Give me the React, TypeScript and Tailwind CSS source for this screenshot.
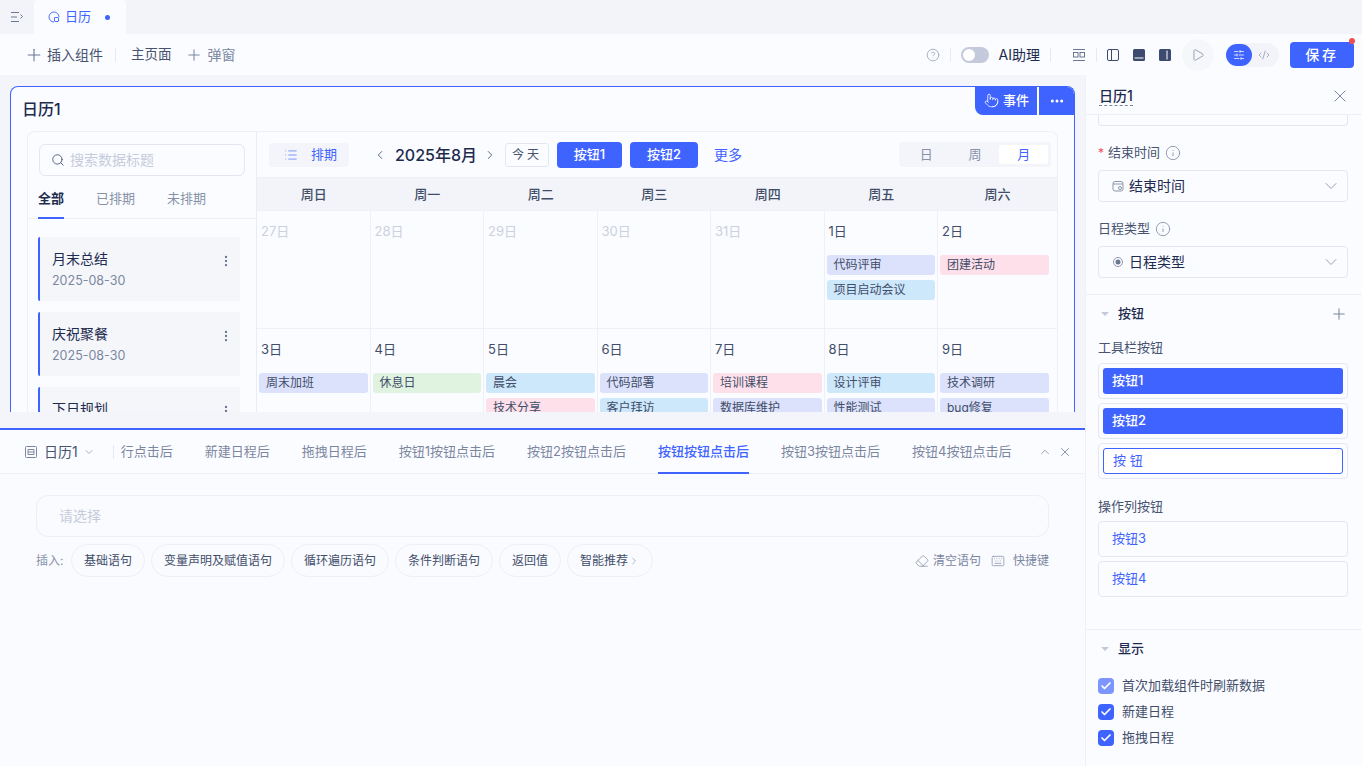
import React from 'react';
import { Plus, ChevronLeft, ChevronRight, ChevronDown, ChevronUp, X, Search, MoreVertical, MoreHorizontal, Check, Info, CircleHelp, Pointer, SlidersHorizontal, CodeXml, Play, List, Eraser, Keyboard } from 'lucide-react';

const weekDays = ['周日', '周一', '周二', '周三', '周四', '周五', '周六'];

const purple = 'bg-[#dce2fb]';
const pink = 'bg-[#fde0ea]';
const blue = 'bg-[#cde7fb]';
const green = 'bg-[#e0f3e0]';

type Cell = { day: string; muted?: boolean; events: [string, string][] };

const rows: Cell[][] = [
  [
    { day: '27日', muted: true, events: [] },
    { day: '28日', muted: true, events: [] },
    { day: '29日', muted: true, events: [] },
    { day: '30日', muted: true, events: [] },
    { day: '31日', muted: true, events: [] },
    { day: '1日', events: [['代码评审', purple], ['项目启动会议', blue]] },
    { day: '2日', events: [['团建活动', pink]] },
  ],
  [
    { day: '3日', events: [['周末加班', purple]] },
    { day: '4日', events: [['休息日', green]] },
    { day: '5日', events: [['晨会', blue], ['技术分享', pink]] },
    { day: '6日', events: [['代码部署', purple], ['客户拜访', blue]] },
    { day: '7日', events: [['培训课程', pink], ['数据库维护', purple]] },
    { day: '8日', events: [['设计评审', blue], ['性能测试', purple]] },
    { day: '9日', events: [['技术调研', purple], ['bug修复', purple]] },
  ],
];

const eventTabs = ['新建日程后', '拖拽日程后', '按钮1按钮点击后', '按钮2按钮点击后', '按钮按钮点击后', '按钮3按钮点击后', '按钮4按钮点击后'];
const chips = ['基础语句', '变量声明及赋值语句', '循环遍历语句', '条件判断语句', '返回值'];

const Sep = () => <div className="w-px h-3.5 bg-[#e6e9f2]" />;

const PanelIcon = ({ part }: { part: 'left' | 'bottom' | 'right' }) => (
  <svg width="14" height="14" viewBox="0 0 14 14" className="text-[#3b4a6e]">
    {part === 'left' && (
      <>
        <rect x="1.5" y="1.5" width="11" height="11" rx="1.5" fill="none" stroke="currentColor" />
        <path d="M5.5 1.5v11" stroke="currentColor" />
      </>
    )}
    {part === 'bottom' && (
      <>
        <rect x="1" y="1" width="12" height="12" rx="1.5" fill="currentColor" />
        <path d="M2.5 10h9" stroke="#fff" strokeWidth="1" />
      </>
    )}
    {part === 'right' && (
      <>
        <rect x="1" y="1" width="12" height="12" rx="1.5" fill="currentColor" />
        <path d="M9 2.5v9" stroke="#fff" strokeWidth="1" />
      </>
    )}
  </svg>
);

const Caret = () => <div className="w-0 h-0 border-x-[4px] border-x-transparent border-t-[4px] border-t-[#c3c9d8]" />;

const ScheduleCard = ({ title, date }: { title: string; date: string }) => (
  <div className="h-[64px] shrink-0 bg-[#f4f6fa] border-l-2 border-[#3f63ff] rounded-l-[2px] pl-3 pr-[7px] pt-[11px] flex justify-between">
    <div>
      <div className="text-sm leading-[22px] text-[#1d2b4f]">{title}</div>
      <div className="text-[12.5px] leading-[22px] text-[#7c879f]">{date}</div>
    </div>
    <MoreVertical className="w-3.5 h-3.5 mt-1.5 text-[#6b7690]" strokeWidth={2} />
  </div>
);

const ButtonBox = ({ label, variant }: { label: string; variant: 'fill' | 'outline' | 'plain' }) => (
  <div className={`border border-[#e4e7f1] rounded-[4px] h-9 ${variant === 'plain' ? '' : 'p-1'}`}>
    {variant === 'fill' && <div className="h-full bg-[#3f63ff] rounded-[3px] pl-[9px] text-[13px] font-medium text-white flex items-center">{label}</div>}
    {variant === 'outline' && <div className="h-full border border-[#3f63ff] bg-white rounded-[3px] pl-[9px] text-[13px] text-[#3f63ff] flex items-center">{label}</div>}
    {variant === 'plain' && <div className="h-full pl-[13px] text-[13px] text-[#3f63ff] flex items-center">{label}</div>}
  </div>
);

const CheckRow = ({ label, light }: { label: string; light?: boolean }) => (
  <div className="flex items-center h-4 gap-2">
    <div className={`w-4 h-4 rounded-[4px] flex items-center justify-center ${light ? 'bg-[#7c95ff]' : 'bg-[#3f63ff]'}`}>
      <Check className="w-3 h-3 text-white" strokeWidth={3.5} />
    </div>
    <span className="text-[13px] text-[#414d69]">{label}</span>
  </div>
);

const SelectField = ({ label, icon, required }: { label: string; icon: React.ReactNode; required?: boolean }) => (
  <div>
    <div className="h-[22px] flex items-center text-[13px] text-[#47536f] gap-[5px]">
      {required && <span className="text-[#f0514f] text-xs -mr-[1px]">*</span>}
      <span>{label}</span>
      <Info className="w-4 h-4 text-[#8d97ad]" strokeWidth={1.4} />
    </div>
    <div className="mt-[6px] h-8 border border-[#e4e7f1] rounded-[4px] pl-[13px] pr-[6px] flex items-center text-sm text-[#1d2b4f]">
      <span className="w-[12px] flex justify-center mr-[5px]">{icon}</span>
      <span className="flex-1">{label}</span>
      <ChevronDown className="w-5 h-5 text-[#8d97ad]" strokeWidth={1.1} />
    </div>
  </div>
);

export default function App() {
  return (
    <div className="w-[1362px] h-[766px] overflow-hidden flex flex-col bg-[#fbfcff] font-['Inter','Noto_Sans_CJK_SC',sans-serif] text-[#1d2b4f]">
      {/* Tabs */}
      <div className="h-[34px] shrink-0 bg-[#f2f4f9] flex items-end">
        <div className="w-[34px] h-[34px] flex items-center justify-center">
          <svg width="14" height="12" viewBox="0 0 14 12" fill="none" stroke="#6b7690" strokeWidth="1">
            <path d="M1 1.5h8M1 6h6M1 10.5h8M10.5 3.5l2 2-2 2" />
          </svg>
        </div>
        <div className="w-[92px] h-[34px] bg-[#fbfcff] rounded-t-[4px] flex items-center pl-[14px] text-[13px] text-[#3f63ff]">
          <svg width="12" height="12" viewBox="0 0 12 12" fill="none" stroke="#3f63ff" strokeWidth="0.9" className="mr-[5px]">
            <path d="M11 6a5 5 0 1 0-5 5" />
            <rect x="6.5" y="6.5" width="4" height="4" rx="0.5" />
          </svg>
          <span>日历</span>
          <span className="ml-[14px] w-[5px] h-[5px] rounded-full bg-[#3f63ff]" />
        </div>
      </div>

      {/* Toolbar */}
      <div className="h-[41px] shrink-0 flex items-center pl-[24px] pr-2">
        <Plus className="w-5 h-5 text-[#6b7690]" strokeWidth={1.3} />
        <span className="ml-[3px] text-sm text-[#47536f]">插入组件</span>
        <div className="ml-3 mr-[15px]"><Sep /></div>
        <span className="text-[13.5px] text-[#47536f]">主页面</span>
        <Plus className="ml-[13px] w-[18px] h-[18px] text-[#7c879f]" strokeWidth={1.4} />
        <span className="ml-[5px] text-sm text-[#7c879f]">弹窗</span>
        <div className="flex-1" />
        <CircleHelp className="w-3.5 h-3.5 text-[#9aa3b6]" strokeWidth={1.4} />
        <div className="ml-[10px] mr-[10px]"><Sep /></div>
        <div className="w-7 h-4 rounded-full bg-[#c4cadb] p-0.5 flex">
          <div className="w-3 h-3 rounded-full bg-white" />
        </div>
        <span className="ml-[10px] text-sm text-[#1d2b4f]">AI助理</span>
        <div className="ml-[10px] mr-[11px]"><Sep /></div>
        <svg width="14" height="14" viewBox="0 0 14 14" fill="none" stroke="#6b7690" className="ml-[10px]">
          <path d="M1 1.5h12M1 12.5h12" />
          <rect x="1.5" y="4.5" width="4.5" height="4.5" />
          <rect x="8" y="4.5" width="4.5" height="4.5" />
        </svg>
        <div className="ml-[10px] mr-[9px]"><Sep /></div>
        <div className="flex items-center gap-[12px]">
          <PanelIcon part="left" />
          <PanelIcon part="bottom" />
          <PanelIcon part="right" />
        </div>
        <div className="ml-[10px] w-8 h-8 rounded-full bg-[#f5f7fb] flex items-center justify-center">
          <Play className="w-3.5 h-3.5 text-[#7c879f]" strokeWidth={1.3} />
        </div>
        <div className="ml-3 w-[53px] h-6 rounded-full bg-[#f2f4f9] flex items-center">
          <div className="w-[26px] h-[22px] rounded-full bg-[#3f63ff] flex items-center justify-center">
            <SlidersHorizontal className="w-3 h-3 text-white" strokeWidth={1.5} />
          </div>
          <CodeXml className="ml-[6px] w-3 h-3 text-[#7c879f]" strokeWidth={1.3} />
        </div>
        <div className="relative ml-[11px] w-16 h-[26px] rounded-[4px] bg-[#3f63ff] text-white text-sm font-medium flex items-center justify-center tracking-[0.2em]">
          保存
          <span className="absolute -top-[4px] -right-[1px] w-1.5 h-1.5 rounded-full bg-[#f0514f]" />
        </div>
      </div>

      <div className="flex-1 min-h-0 flex">
        {/* Left */}
        <div className="w-[1085px] shrink-0 flex flex-col">
          {/* Canvas */}
          <div className="h-[353px] shrink-0 bg-[#f3f5fa] pt-[11px] pl-[10px] pr-[10px] pb-[16px]">
            <div className="relative h-full bg-[#fbfcff] border-x border-t border-[#3f63ff] rounded-t-lg overflow-hidden flex flex-col">
              <div className="h-[44px] shrink-0 pl-[11px] flex items-center text-base font-medium text-[#1d2b4f]">日历1</div>
              <div className="absolute top-[-1px] right-[-1px] h-[29px] w-[100px] bg-[#3f63ff] rounded-bl-lg rounded-tr-lg flex text-white">
                <div className="w-[64px] pl-[1px] flex items-center justify-center gap-1 border-r-2 border-[#fbfcff]">
                  <Pointer className="w-[15px] h-[15px]" strokeWidth={1.3} />
                  <span className="text-[13px] font-medium">事件</span>
                </div>
                <div className="flex-1 flex items-center justify-center">
                  <MoreHorizontal className="w-4 h-4" strokeWidth={2.5} />
                </div>
              </div>

              <div className="ml-4 mr-4 flex-1 min-h-0 border-x border-t border-[#eef0f6] rounded-t-lg flex">
                {/* Sidebar */}
                <div className="w-[229px] shrink-0 border-r border-[#e9ecf3] flex flex-col">
                  <div className="pt-3 pl-[11px] pr-[11px]">
                    <div className="h-8 border border-[#e4e7f1] rounded-md flex items-center pl-[11px] gap-[5px]">
                      <Search className="w-3.5 h-3.5 text-[#47536f]" strokeWidth={1.5} />
                      <span className="text-sm text-[#c6ccdb]">搜索数据标题</span>
                    </div>
                  </div>
                  <div className="mt-[10px] h-[33px] shrink-0 border-b border-[#eef0f6] pl-[10px] pt-[2px] flex items-start gap-[32px] text-[13px] leading-5 text-[#8792a8]">
                    <div className="relative h-[31px] font-semibold text-[#1d2b4f]">
                      全部
                      <div className="absolute bottom-0 left-0 right-0 h-0.5 bg-[#3f63ff]" />
                    </div>
                    <span>已排期</span>
                    <span>未排期</span>
                  </div>
                  <div className="mt-[18px] ml-[10px] mr-[16px] flex flex-col gap-[11px]">
                    <ScheduleCard title="月末总结" date="2025-08-30" />
                    <ScheduleCard title="庆祝聚餐" date="2025-08-30" />
                    <ScheduleCard title="下日规划" date="2025-08-30" />
                  </div>
                </div>

                {/* Calendar */}
                <div className="flex-1 min-w-0 flex flex-col">
                  <div className="h-[46px] shrink-0 flex items-center pl-3 pr-[6px] border-b border-[#eef0f6]">
                    <div className="w-20 h-6 rounded bg-[#f3f5fa] flex items-center pl-[15px] gap-[13px] text-[13px] text-[#3f63ff]">
                      <List className="w-3.5 h-3.5 text-[#5b7bff]" strokeWidth={1.3} />
                      <span>排期</span>
                    </div>
                    <ChevronLeft className="ml-[24px] w-3.5 h-3.5 text-[#47536f]" strokeWidth={1.5} />
                    <span className="ml-2 text-base font-medium text-[#1d2b4f] w-[80px] whitespace-nowrap">2025年8月</span>
                    <ChevronRight className="ml-2 w-3.5 h-3.5 text-[#47536f]" strokeWidth={1.5} />
                    <div className="ml-2 w-11 h-6 border border-[#e4e7f1] rounded-[3px] text-xs text-[#47536f] flex items-center justify-center tracking-[0.25em]">今天</div>
                    <div className="ml-2 w-[65px] h-[26px] rounded bg-[#3f63ff] text-white text-[13px] font-medium flex items-center justify-center">按钮1</div>
                    <div className="ml-2 w-[68px] h-[26px] rounded bg-[#3f63ff] text-white text-[13px] font-medium flex items-center justify-center">按钮2</div>
                    <span className="ml-4 text-sm text-[#3f63ff]">更多</span>
                    <div className="flex-1" />
                    <div className="w-[152px] h-[25px] rounded bg-[#f3f5fa] p-[3px] flex text-[13px] text-[#8792a8]">
                      <div className="flex-1 flex items-center justify-center">日</div>
                      <div className="flex-1 flex items-center justify-center">周</div>
                      <div className="flex-1 bg-white rounded-[2px] flex items-center justify-center text-[#3f63ff]">月</div>
                    </div>
                  </div>
                  <div className="h-[33px] shrink-0 grid grid-cols-[repeat(6,113.5px)_1fr] bg-[#f2f4f9] border-b border-[#eef0f6]">
                    {weekDays.map((d) => (
                      <div key={d} className="pt-[2px] flex items-center justify-center text-[13px] font-medium text-[#414d69]">{d}</div>
                    ))}
                  </div>
                  <div className="flex-1 min-h-0 overflow-hidden">
                    {rows.map((row, i) => (
                      <div key={i} className="h-[118px] grid grid-cols-[repeat(6,113.5px)_1fr] border-b border-[#eef0f6]">
                        {row.map((cell, j) => (
                          <div key={cell.day} className={j < 6 ? 'border-r border-[#eef0f6]' : ''}>
                            <div className={`h-[44px] pl-[4px] pt-[10px] text-[13px] leading-[20px] ${cell.muted ? 'text-[#ccd1de]' : 'text-[#414d69]'}`}>{cell.day}</div>
                            <div className={`flex flex-col gap-[5px] pl-[2px] ${j < 6 ? 'pr-[2px]' : 'pr-[8px]'}`}>
                              {cell.events.map(([name, color]) => (
                                <div key={name} className={`h-5 rounded-[3px] pl-[7px] text-xs leading-5 text-[#414d69] ${color}`}>{name}</div>
                              ))}
                            </div>
                          </div>
                        ))}
                      </div>
                    ))}
                  </div>
                </div>
              </div>
            </div>
          </div>

          {/* Event panel */}
          <div className="flex-1 min-h-0 border-t-2 border-[#3f63ff] flex flex-col">
            <div className="h-[44px] shrink-0 border-b border-[#eef0f6] flex items-center pl-[25px] text-[13px] text-[#7c879f]">
              <svg width="12" height="12" viewBox="0 0 12 12" fill="none" stroke="#7c879f" className="mr-[7px]">
                <rect x="0.5" y="0.5" width="11" height="11" rx="1" />
                <path d="M3 3.5h6v5H3zM3 6h6" />
              </svg>
              <span className="text-sm text-[#47536f]">日历1</span>
              <ChevronDown className="ml-[5px] w-3 h-3 text-[#8d97ad]" strokeWidth={1.5} />
              <div className="ml-[18px] mr-[7px]"><Sep /></div>
              <span>行点击后</span>
              {eventTabs.map((t) => (
                <div key={t} className={`relative ml-[32px] h-full flex items-center ${t === '按钮按钮点击后' ? 'font-medium text-[#3f63ff]' : ''}`}>
                  {t}
                  {t === '按钮按钮点击后' && <div className="absolute bottom-[-1px] left-0 right-0 h-0.5 bg-[#3f63ff]" />}
                </div>
              ))}
              <ChevronUp className="ml-[27px] w-3.5 h-3.5 text-[#7c879f]" strokeWidth={1.3} />
              <X className="ml-[6px] w-3.5 h-3.5 text-[#7c879f]" strokeWidth={1.5} />
            </div>
            <div className="flex-1 bg-[#fafbff] pt-[21px] pl-[36px] pr-[36px]">
              <div className="h-[42px] border border-[#eceff6] rounded-xl pl-[22px] flex items-center text-sm text-[#c6ccdb]">请选择</div>
              <div className="mt-[7px] flex items-center text-xs text-[#414d69]">
                <span className="text-[#8792a8] w-[35px] shrink-0">插入:</span>
                <div className="flex gap-1.5">
                  {chips.map((c) => (
                    <div key={c} className="h-[33px] px-3 rounded-full border border-[#eceff6] flex items-center">{c}</div>
                  ))}
                  <div className="h-[33px] pl-3 pr-3 rounded-full border border-[#eceff6] flex items-center">
                    智能推荐
                    <ChevronRight className="w-3 h-3 text-[#9aa3b6]" strokeWidth={1.5} />
                  </div>
                </div>
                <div className="flex-1" />
                <Eraser className="w-3.5 h-3.5 text-[#7c879f]" strokeWidth={1.2} />
                <span className="ml-1 text-[#7c879f]">清空语句</span>
                <Keyboard className="ml-[10px] w-3.5 h-3.5 text-[#7c879f]" strokeWidth={1.2} />
                <span className="ml-2 text-[#7c879f]">快捷键</span>
              </div>
            </div>
          </div>
        </div>

        {/* Right panel */}
        <div className="flex-1 min-w-0 border-l border-[#eef0f6] flex flex-col">
          <div className="h-[40px] shrink-0 border-b border-[#eef0f6] pl-[13px] pr-[12px] pt-[2px] flex items-center justify-between">
            <span className="text-sm font-medium text-[#1d2b4f] border-b border-dashed border-[#7c879f] leading-[19px]">日历1</span>
            <X className="w-5 h-5 text-[#7c879f]" strokeWidth={1.2} />
          </div>
          <div className="pl-[12px] pr-[14px]">
            <div className="h-[11px] border-x border-b border-[#e4e7f1] rounded-b-[4px]" />
            <div className="mt-[16px] flex flex-col gap-[16px]">
              <SelectField
                required
                label="结束时间"
                icon={
                  <svg width="12" height="12" viewBox="0 0 12 12" fill="none" stroke="#8d97ad">
                    <rect x="1" y="1.5" width="10" height="9.5" rx="2" />
                    <path d="M1 4h10" />
                    <circle cx="8" cy="8" r="1.5" />
                  </svg>
                }
              />
              <SelectField
                label="日程类型"
                icon={
                  <svg width="12" height="12" viewBox="0 0 12 12">
                    <circle cx="6" cy="6" r="4.5" fill="none" stroke="#8d97ad" />
                    <circle cx="6" cy="6" r="2.5" fill="#6b7690" />
                  </svg>
                }
              />
            </div>
          </div>
          <div className="mt-[16px] border-t border-[#eef0f6] pl-[12px] pr-[14px]">
            <div className="h-[37px] pl-[3px] flex items-center">
              <Caret />
              <span className="ml-[9px] text-[13px] font-medium">按钮</span>
              <div className="flex-1" />
              <Plus className="w-[18px] h-[18px] text-[#7c879f]" strokeWidth={1.4} />
            </div>
            <div className="mt-[8px] h-[16px] flex items-center text-[13px] text-[#47536f]">工具栏按钮</div>
            <div className="mt-[7px] flex flex-col gap-1">
              <ButtonBox label="按钮1" variant="fill" />
              <ButtonBox label="按钮2" variant="fill" />
              <ButtonBox label="按 钮" variant="outline" />
            </div>
            <div className="mt-[20px] h-[16px] flex items-center text-[13px] text-[#47536f]">操作列按钮</div>
            <div className="mt-[6px] flex flex-col gap-1">
              <ButtonBox label="按钮3" variant="plain" />
              <ButtonBox label="按钮4" variant="plain" />
            </div>
          </div>
          <div className="mt-[32px] border-t border-[#eef0f6] pl-[12px] pr-[14px]">
            <div className="h-[38px] pl-[3px] flex items-center">
              <Caret />
              <span className="ml-[9px] text-[13px] font-medium">显示</span>
            </div>
            <div className="mt-[10px] flex flex-col gap-[10px]">
              <CheckRow label="首次加载组件时刷新数据" light />
              <CheckRow label="新建日程" />
              <CheckRow label="拖拽日程" />
            </div>
          </div>
        </div>
      </div>
    </div>
  );
}
